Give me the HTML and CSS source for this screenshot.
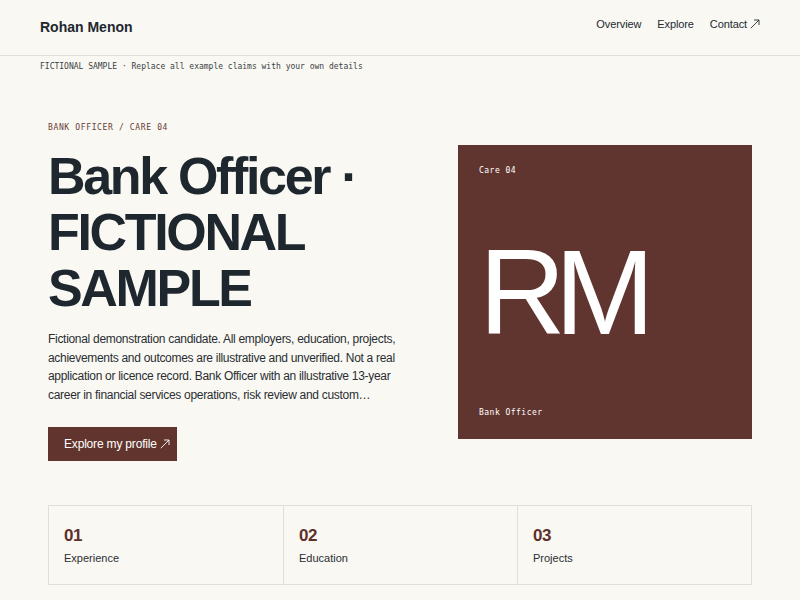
FILE: index.html
```html
<!DOCTYPE html>
<html lang="en">
<head>
<meta charset="utf-8">
<title>Rohan Menon</title>
<link rel="stylesheet" href="styles.css">
</head>
<body>
<header class="site-header">
  <div class="brand">Rohan Menon</div>
  <nav class="nav">
    <a class="nav-link" href="#">Overview</a>
    <a class="nav-link" href="#">Explore</a>
    <a class="nav-link" href="#">Contact <svg class="arrow" viewBox="0 0 10 10" width="10" height="10"><path d="M0.8 9.2 L9 1 M4 1 H9 V6" fill="none" stroke="currentColor" stroke-width="0.9"/></svg></a>
  </nav>
</header>
<div class="notice">FICTIONAL SAMPLE · Replace all example claims with your own details</div>
<main class="page">
  <section class="hero">
    <div class="hero-text">
      <div class="eyebrow">BANK OFFICER / CARE 04</div>
      <h1 class="title">Bank Officer · FICTIONAL SAMPLE</h1>
      <p class="lede">Fictional demonstration candidate. All employers, education, projects, achievements and outcomes are illustrative and unverified. Not a real application or licence record. Bank Officer with an illustrative 13-year career in financial services operations, risk review and custom…</p>
      <a class="btn" href="#">Explore my profile <svg class="arrow" viewBox="0 0 10 10" width="10" height="10"><path d="M0.8 9.2 L9 1 M4 1 H9 V6" fill="none" stroke="currentColor" stroke-width="0.9"/></svg></a>
    </div>
    <div class="card">
      <div class="card-top">Care 04</div>
      <div class="monogram">RM</div>
      <div class="card-bottom">Bank Officer</div>
    </div>
  </section>
  <section class="stats">
    <div class="stat"><div class="stat-num">01</div><div class="stat-label">Experience</div></div>
    <div class="stat"><div class="stat-num">02</div><div class="stat-label">Education</div></div>
    <div class="stat"><div class="stat-num">03</div><div class="stat-label">Projects</div></div>
  </section>
</main>
</body>
</html>
```

FILE: styles.css
```css
* { box-sizing: border-box; }
html, body { margin: 0; padding: 0; }
body {
  background: #f9f8f3;
  color: #1e262e;
  font-family: "Liberation Sans", Arial, sans-serif;
}
a { color: inherit; text-decoration: none; }

.site-header {
  height: 56px;
  border-bottom: 1px solid #e2dfd8;
  padding: 17px 40px 0;
  display: flex;
  justify-content: space-between;
  align-items: flex-start;
}
.brand {
  font-size: 14px;
  font-weight: 700;
  line-height: 20px;
  color: #1e262e;
}
.nav {
  display: flex;
  gap: 16px;
  font-size: 11px;
  line-height: 14px;
  letter-spacing: -0.01em;
  color: #222a31;
}
.nav-link { display: inline-flex; align-items: center; gap: 3px; }
.arrow { display: inline-block; }

.notice {
  padding: 6px 40px 0;
  font-family: "DejaVu Sans Mono", "Liberation Mono", monospace;
  font-size: 8px;
  line-height: 10px;
  color: #3b3f44;
}

.page { padding: 50px 48px 0; }

.hero {
  display: grid;
  grid-template-columns: 1fr 294px;
  gap: 48px;
  align-items: center;
}
.eyebrow {
  font-family: "DejaVu Sans Mono", "Liberation Mono", monospace;
  font-size: 8px;
  line-height: 12px;
  letter-spacing: 0.08em;
  color: #6a3b34;
  margin-bottom: 14px;
}
.title {
  margin: 0;
  font-size: 52px;
  line-height: 56px;
  font-weight: 700;
  letter-spacing: -0.045em;
  color: #1e262e;
}
.lede {
  margin: 14px 0 0;
  font-size: 12px;
  line-height: 18.5px;
  letter-spacing: -0.025em;
  color: #2a2e32;
}
.btn {
  margin-top: 23px;
  display: inline-flex;
  align-items: center;
  gap: 3px;
  height: 34px;
  padding: 0 7px 0 16px;
  background: #61352e;
  color: #fff;
  font-size: 12px;
  letter-spacing: -0.015em;
}

.card {
  aspect-ratio: 1 / 1;
  background: #61352f;
  color: #fff;
  padding: 21px;
  display: flex;
  flex-direction: column;
  justify-content: space-between;
}
.card-top, .card-bottom {
  font-family: "DejaVu Sans Mono", "Liberation Mono", monospace;
  font-size: 8px;
  line-height: 10px;
  letter-spacing: 0.06em;
}
.monogram {
  font-size: 120px;
  line-height: 1;
  letter-spacing: -0.09em;
  font-weight: 400;
}

.stats {
  margin-top: 44px;
  display: grid;
  grid-template-columns: repeat(3, 1fr);
  border: 1px solid #e2dfd8;
}
.stat {
  padding: 20px 15px 18px;
  height: 78px;
}
.stat + .stat { border-left: 1px solid #e2dfd8; }
.stat-num {
  font-size: 17px;
  font-weight: 700;
  line-height: 20px;
  letter-spacing: -0.02em;
  color: #5e3029;
}
.stat-label {
  margin-top: 5px;
  font-size: 11px;
  line-height: 14px;
  color: #2b2f33;
}
```
